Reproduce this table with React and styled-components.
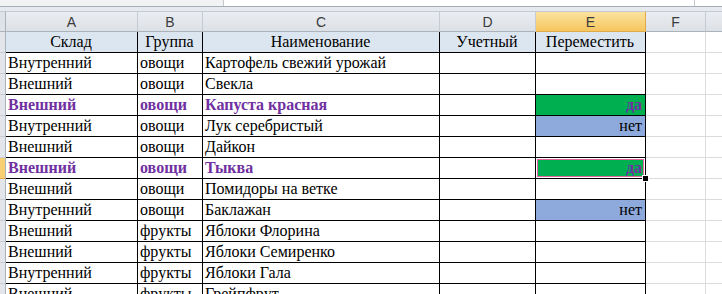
import React from 'react';
import styled, { createGlobalStyle, css } from 'styled-components';

const GlobalStyle = createGlobalStyle`
  body {
    margin: 0;
    background: #ffffff;
    overflow: hidden;
  }
`;

// the last column runs off the right edge, its letter is never seen
const COLUMNS = ['A', 'B', 'C', 'D', 'E', 'F', ''];
const TITLES = ['Склад', 'Группа', 'Наименование', 'Учетный', 'Переместить'];

const ROWS = [
  { store: 'Внутренний', group: 'овощи', name: 'Картофель свежий урожай' },
  { store: 'Внешний', group: 'овощи', name: 'Свекла' },
  { store: 'Внешний', group: 'овощи', name: 'Капуста красная', hot: true, move: 'да' },
  { store: 'Внутренний', group: 'овощи', name: 'Лук серебристый', move: 'нет' },
  { store: 'Внешний', group: 'овощи', name: 'Дайкон' },
  { store: 'Внешний', group: 'овощи', name: 'Тыква', hot: true, move: 'да', active: true },
  { store: 'Внешний', group: 'овощи', name: 'Помидоры на ветке' },
  { store: 'Внутренний', group: 'овощи', name: 'Баклажан', move: 'нет' },
  { store: 'Внешний', group: 'фрукты', name: 'Яблоки Флорина' },
  { store: 'Внешний', group: 'фрукты', name: 'Яблоки Семиренко' },
  { store: 'Внутренний', group: 'фрукты', name: 'Яблоки Гала' },
  { store: 'Внешний', group: 'фрукты', name: 'Грейпфрут' },
];

const MOVE_FILL = { 'да': '#00b050', 'нет': '#8eaadc' };

const Window = styled.div`
  width: 722px;
  height: 294px;
  overflow: hidden;
  background: #e6e9ed;
`;

const FormulaBar = styled.div`
  display: flex;
  height: 6px;
  background: #ffffff;
  border-bottom: 1px solid #a7aeb8;
`;

const NameBox = styled.div`
  width: 223px;
  background: #f1f2f4;
  border-right: 1px solid #c3c8cf;
`;

const FormulaInput = styled.div`
  flex: 1;
  border-right: 1px solid #c3c8cf;
  max-width: 470px;
`;

/* sheet area is wider than the window */
const Grid = styled.div`
  margin-top: 4px;
  display: grid;
  grid-template-columns: 6px 132px 65px 237px 96px 110px 60px 64px;
  grid-auto-rows: 21px;
  width: 770px;
  background: #ffffff;
`;

const Corner = styled.div`
  background: #dfe3e8;
  border-top: 1px solid #c6cbd2;
  border-right: 1px solid #aab2bc;
  border-bottom: 1px solid #aab2bc;
`;

const ColumnHead = styled.div`
  display: flex;
  align-items: center;
  justify-content: center;
  font-family: 'Liberation Sans', Arial, sans-serif;
  font-size: 14px;
  color: #3b3b3b;
  border-top: 1px solid #c6cbd2;
  border-right: 1px solid #c6cbd2;
  border-bottom: 1px solid #aab2bc;
  background: linear-gradient(#e9ecf0, #dde1e6);
  ${p => p.$current && css`
    background: linear-gradient(#fbe3a0, #f6c65e);
    border-right-color: #e2a94a;
    border-bottom-color: #e2a94a;
  `}
`;

const RowHead = styled.div`
  background: #e2e6eb;
  border-right: 1px solid #aab2bc;
  border-bottom: 1px solid #c9ced5;
  ${p => p.$current && css`
    background: #f8cf72;
    border-bottom-color: #e2a94a;
  `}
`;

const Cell = styled.div`
  position: relative;
  display: flex;
  align-items: flex-end;
  padding: 0 3px 1px 2px;
  overflow: visible;
  white-space: nowrap;
  font-family: 'Liberation Serif', 'Times New Roman', serif;
  font-size: 16px;
  line-height: 19px;
  color: #000000;
  background: ${p => p.$fill || '#ffffff'};
  justify-content: ${p => (p.$align === 'right' ? 'flex-end' : p.$align === 'center' ? 'center' : 'flex-start')};
  border-right: 1px solid ${p => (p.$table ? '#000000' : '#dadcdd')};
  border-bottom: 1px solid ${p => (p.$table ? '#000000' : '#dadcdd')};
  ${p => p.$bold && css`
    font-weight: bold;
    color: #7030a0;
  `}
  ${p => p.$active && css`
    box-shadow: inset 0 0 0 1px #ffffff, inset 0 0 0 2px #e2649f;
  `}
`;

const FillHandle = styled.span`
  position: absolute;
  right: -4px;
  bottom: -4px;
  width: 5px;
  height: 5px;
  background: #000000;
  border: 1px solid #ffffff;
  z-index: 2;
`;

const Spare = () => (
  <>
    <Cell />
    <Cell />
  </>
);

export default function App() {
  return (
    <Window>
      <GlobalStyle />
      <FormulaBar>
        <NameBox />
        <FormulaInput />
      </FormulaBar>
      <Grid>
        <Corner />
        {COLUMNS.map((c, i) => (
          <ColumnHead key={i} $current={c === 'E'}>{c}</ColumnHead>
        ))}

        <RowHead />
        {TITLES.map(t => (
          <Cell key={t} $table $align="center" $fill="#dce6f1">{t}</Cell>
        ))}
        <Spare />

        {ROWS.map((r, i) => (
          <React.Fragment key={i}>
            <RowHead $current={r.active} />
            <Cell $table $bold={r.hot}>{r.store}</Cell>
            <Cell $table $bold={r.hot}>{r.group}</Cell>
            <Cell $table $bold={r.hot}>{r.name}</Cell>
            <Cell $table />
            <Cell
              $table
              $align="right"
              $bold={r.move === 'да'}
              $fill={MOVE_FILL[r.move]}
              $active={r.active}
            >
              {r.move}
              {r.active && <FillHandle />}
            </Cell>
            <Spare />
          </React.Fragment>
        ))}
      </Grid>
    </Window>
  );
}
